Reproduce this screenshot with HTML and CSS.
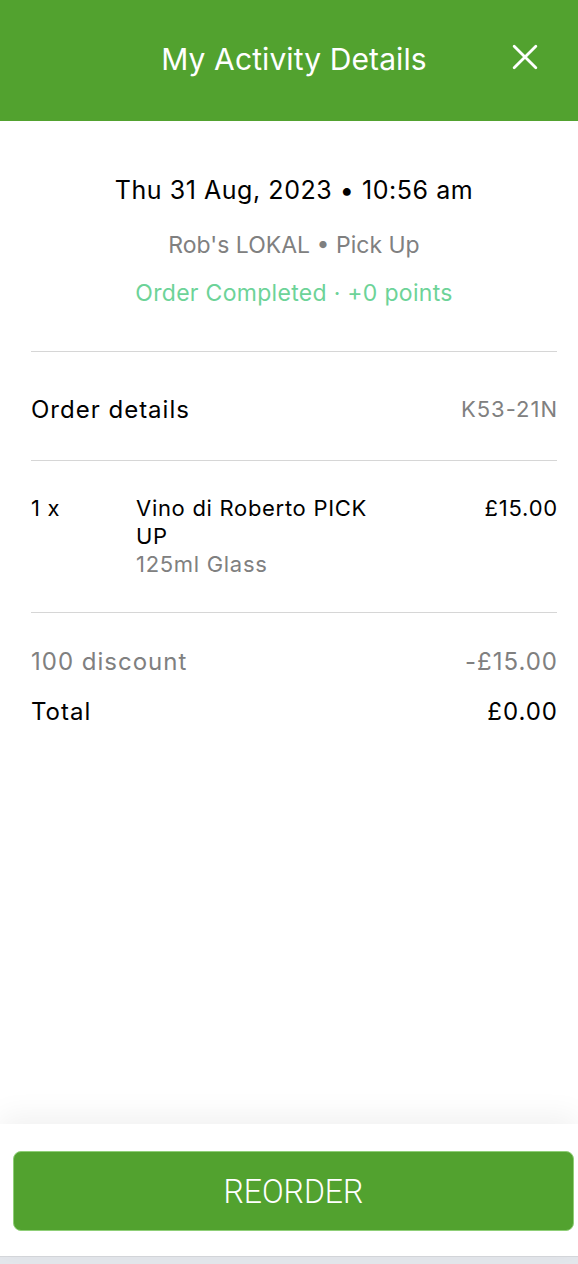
FILE: index.html
```html
<!DOCTYPE html>
<html lang="en">
<head>
<meta charset="utf-8">
<title>My Activity Details</title>
<link rel="stylesheet" href="styles.css">
</head>
<body>
<div class="screen">
  <header class="topbar">
    <h1 class="topbar-title">My Activity Details</h1>
    <button class="close-btn" aria-label="Close">
      <svg viewBox="0 0 24 24" width="26" height="26"><path d="M2 2 L22 22 M22 2 L2 22" stroke="#fff" stroke-width="2.6" stroke-linecap="round" fill="none"/></svg>
    </button>
  </header>

  <main class="content">
    <section class="summary">
      <div class="summary-date">Thu 31 Aug, 2023 • 10:56 am</div>
      <div class="summary-place">Rob's LOKAL • Pick Up</div>
      <div class="summary-status">Order Completed · +0 points</div>
    </section>

    <div class="divider"></div>

    <section class="order-head">
      <span class="order-title">Order details</span>
      <span class="order-code">K53-21N</span>
    </section>

    <div class="divider"></div>

    <section class="item">
      <span class="item-qty">1 x</span>
      <div class="item-info">
        <div class="item-name">Vino di Roberto PICK UP</div>
        <div class="item-variant">125ml Glass</div>
      </div>
      <span class="item-price">£15.00</span>
    </section>

    <div class="divider"></div>

    <section class="totals">
      <div class="totals-row discount"><span>100 discount</span><span class="amount">-£15.00</span></div>
      <div class="totals-row total"><span>Total</span><span class="amount">£0.00</span></div>
    </section>
  </main>

  <footer class="footer">
    <button class="reorder-btn"><span class="reorder-label">REORDER</span></button>
  </footer>
  <div class="bottom-strip"></div>
</div>
</body>
</html>
```
FILE: styles.css
```css
* { box-sizing: border-box; }
html, body { margin: 0; padding: 0; }
body {
  font-family: Inter, "Liberation Sans", sans-serif;
  background: #fff;
  color: #000;
}
.screen {
  width: 578px;
  height: 1264px;
  display: flex;
  flex-direction: column;
  overflow: hidden;
}
.topbar {
  height: 121px;
  flex: none;
  background: #52a22f;
  display: flex;
  align-items: center;
  justify-content: center;
  position: relative;
}
.topbar-title {
  margin: 0 0 0 10px;
  color: #fff;
  font-weight: 400;
  font-size: 30px;
  letter-spacing: 0.1px;
  padding-bottom: 4px;
}
.close-btn {
  position: absolute;
  right: 40px;
  top: 44px;
  width: 26px;
  height: 26px;
  padding: 0;
  border: 0;
  background: none;
  display: flex;
}
.content {
  flex: 1;
  padding: 0 21px 0 31px;
}
.summary {
  display: flex;
  flex-direction: column;
  align-items: center;
  padding-top: 54px;
  padding-bottom: 46px;
  margin-left: -10px;
  margin-right: -10px;
}
.summary-date {
  font-size: 25px;
  line-height: 30px;
  letter-spacing: 0.55px;
  color: #000;
}
.summary-place {
  margin-top: 28px;
  font-size: 23px;
  line-height: 24px;
  color: #808080;
}
.summary-status {
  margin-top: 24px;
  font-size: 23px;
  line-height: 24px;
  letter-spacing: 0.3px;
  color: #6dd398;
}
.divider {
  height: 1px;
  background: #d6d6d6;
}
.order-head {
  display: flex;
  justify-content: space-between;
  align-items: center;
  height: 108px;
  padding-top: 6px;
}
.order-title { font-size: 24px; letter-spacing: 1px; }
.order-code { font-size: 22px; letter-spacing: 1px; color: #808080; margin-right: -1px; }
.item {
  display: flex;
  align-items: flex-start;
  padding-top: 33px;
  padding-bottom: 34px;
  font-size: 22px;
  line-height: 28px;
  letter-spacing: 0.7px;
}
.item-qty { width: 105px; flex: none; }
.item-info { width: 240px; flex: none; }
.item-variant { color: #808080; }
.item-price { margin-left: auto; letter-spacing: 0.8px; margin-right: -1px; }
.totals {
  padding-top: 33px;
}
.totals-row {
  display: flex;
  justify-content: space-between;
  font-size: 24px;
  line-height: 32px;
  height: 50px;
  letter-spacing: 1px;
}
.totals-row .amount { margin-right: -1px; }
.totals-row.discount { color: #808080; }
.footer {
  flex: none;
  height: 132px;
  background: #fff;
  padding: 27px 4px 0 13px;
  box-shadow: 0 -8px 28px rgba(0,0,0,0.06);
  position: relative;
}
.reorder-btn {
  width: 100%;
  height: 80px;
  border-radius: 8px;
  background: #52a22f;
  border: 1px solid #8fcf77;
  color: #fff;
  font-family: Roboto, sans-serif;
  font-weight: 300;
  font-size: 34px;
  padding: 0;
}
.reorder-label {
  display: inline-block;
  transform: scaleX(0.94);
}
.bottom-strip {
  flex: none;
  height: 8px;
  background: #e4e7ec;
  border-top: 1px solid #d6d8dc;
}
```
